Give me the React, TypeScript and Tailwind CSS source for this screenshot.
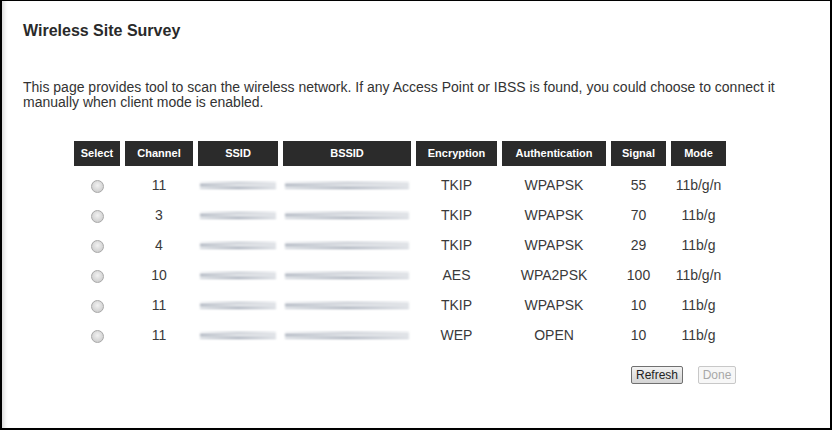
import React from 'react';

type Row = {
	channel: string;
	enc: string;
	auth: string;
	signal: string;
	mode: string;
};

const rows: Row[] = [
	{ channel: '11', enc: 'TKIP', auth: 'WPAPSK', signal: '55', mode: '11b/g/n' },
	{ channel: '3', enc: 'TKIP', auth: 'WPAPSK', signal: '70', mode: '11b/g' },
	{ channel: '4', enc: 'TKIP', auth: 'WPAPSK', signal: '29', mode: '11b/g' },
	{ channel: '10', enc: 'AES', auth: 'WPA2PSK', signal: '100', mode: '11b/g/n' },
	{ channel: '11', enc: 'TKIP', auth: 'WPAPSK', signal: '10', mode: '11b/g' },
	{ channel: '11', enc: 'WEP', auth: 'OPEN', signal: '10', mode: '11b/g' },
];

const headers = [
	{ label: 'Select', w: 'w-[46px]' },
	{ label: 'Channel', w: 'w-[68px]' },
	{ label: 'SSID', w: 'w-[80px]' },
	{ label: 'BSSID', w: 'w-[128px]' },
	{ label: 'Encryption', w: 'w-[81px]' },
	{ label: 'Authentication', w: 'w-[104px]' },
	{ label: 'Signal', w: 'w-[55px]' },
	{ label: 'Mode', w: 'w-[55px]' },
];

// blurred-out network names
function Smudge() {
	return (
		<div className="flex flex-col gap-px px-0.5 blur-[0.8px]">
			<div className="h-px bg-gradient-to-r from-gray-200 via-gray-400 to-gray-300" />
			<div className="h-[2px] bg-gradient-to-r from-gray-400 via-gray-300 to-gray-300" />
			<div className="h-[2px] bg-gradient-to-r from-gray-300 via-gray-400 to-gray-300" />
		</div>
	);
}

function Radio() {
	return (
		<span className="inline-block h-[13px] w-[13px] rounded-full border border-[#a8a8a8] bg-[radial-gradient(circle_at_50%_40%,#f2f2f2,#c4c4c4)] align-middle" />
	);
}

export default function App() {
	const cell = 'h-[25px] px-0 pt-[4px] pb-0 text-center align-middle';

	return (
		<div className="h-[430px] w-[832px] border-t border-b-2 border-l-2 border-r-2 border-black bg-white font-['Liberation_Sans',Arial,sans-serif] text-[#333]">
			<div className="h-full shadow-[inset_5px_0_4px_-3px_#d6d6d6] pl-[21px] pt-[21px]">
				<h1 className="text-[16px] font-bold leading-[18px] text-[#2a2a2a]">
					Wireless Site Survey
				</h1>

				<p className="mt-[40px] w-[768px] text-[14px] leading-[15px]">
					This page provides tool to scan the wireless network. If any Access Point or IBSS is found, you could choose to connect it manually when client mode is enabled.
				</p>

				<table className="ml-[46px] mt-[26px] table-fixed border-separate border-spacing-[5px] text-[14px] text-[#3a3a3a]">
					<thead>
						<tr>
							{headers.map((h) => (
								<th
									key={h.label}
									className={`${h.w} h-[25px] bg-[#2b2b2b] p-0 text-center text-[11px] font-bold text-white`}
								>
									{h.label}
								</th>
							))}
						</tr>
					</thead>
					<tbody>
						{rows.map((r, i) => (
							<tr key={i}>
								<td className={cell}>
									<Radio />
								</td>
								<td className={cell}>{r.channel}</td>
								<td className={cell}>
									<Smudge />
								</td>
								<td className={cell}>
									<Smudge />
								</td>
								<td className={cell}>{r.enc}</td>
								<td className={cell}>{r.auth}</td>
								<td className={cell}>{r.signal}</td>
								<td className={cell}>{r.mode}</td>
							</tr>
						))}
					</tbody>
				</table>

				<div className="mt-[15px] flex w-[713px] justify-end gap-[15px]">
					<button className="h-[18px] w-[52px] rounded-[2px] border border-[#707070] bg-gradient-to-b from-[#f2f2f2] to-[#d4d4d4] text-[12px] leading-none text-[#222]">
						Refresh
					</button>
					<button
						disabled
						className="h-[18px] w-[38px] rounded-[2px] border border-[#c8c8c8] bg-[#f7f7f7] text-[12px] leading-none text-[#a8a8a8]"
					>
						Done
					</button>
				</div>
			</div>
		</div>
	);
}
